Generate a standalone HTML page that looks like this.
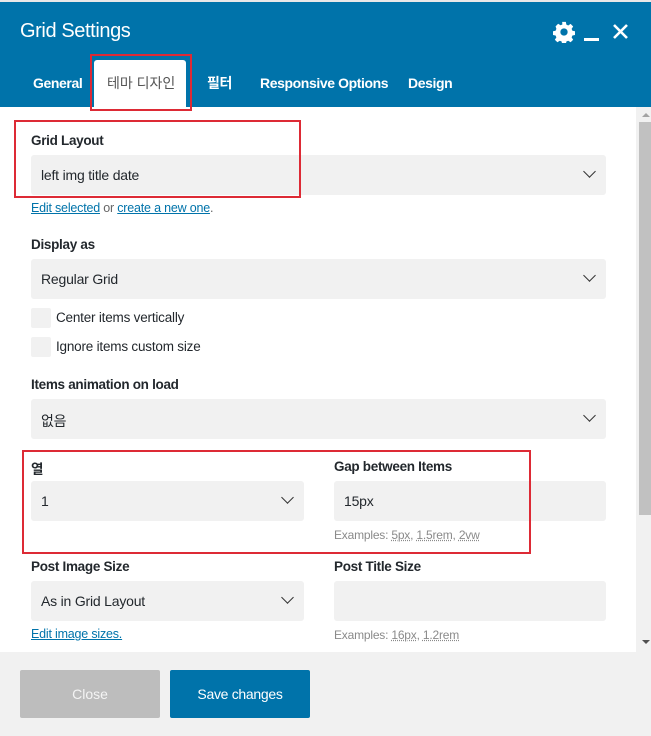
<!DOCTYPE html>
<html><head><meta charset="utf-8"><style>
*{box-sizing:border-box;margin:0;padding:0}
body{width:651px;height:736px;overflow:hidden;background:#fff;font-family:"Liberation Sans","Noto Sans CJK KR",sans-serif;position:relative;color:#23282d}
.a{position:absolute}
.hdr{left:0;top:2px;width:651px;height:105px;background:#0073aa}
.lbl{font-size:13.5px;font-weight:bold;color:#23282d;letter-spacing:-0.3px}
.fld{background:#f1f1f1;border-radius:3px;height:40px;font-size:14px;color:#23282d;padding:12px 10px;letter-spacing:-0.2px}
.chev{position:absolute;right:12px;top:12px;width:9px;height:9px;border-right:1.6px solid #333;border-bottom:1.6px solid #333;transform:rotate(45deg)}
.red{border:2px solid #dd2a35}
.lnk{color:#0073aa;text-decoration:underline;font-size:12.5px}
.ex{font-size:12px;color:#8a8a8a;letter-spacing:-0.2px}
.ex u{text-decoration:underline dotted}
.cb{width:20px;height:20px;background:#f1f1f1;border-radius:2px}
.tab{top:75px;font-size:14px;color:#fff;letter-spacing:-0.4px;font-weight:bold}
</style></head><body>
<div class="a" style="left:0;top:0;width:651px;height:2px;background:#e8e8e8"></div>
<div class="a hdr"></div>
<div class="a" style="left:20px;top:20px;font-size:20px;color:#fff;letter-spacing:-0.4px">Grid Settings</div>
<svg class="a" style="left:553px;top:21px" width="22" height="22" viewBox="0 0 24 24"><path fill="#fff" d="M10 1h4l.6 3 2 .9 2.6-1.7 2.8 2.8-1.7 2.6.9 2 3 .6v4l-3 .6-.9 2 1.7 2.6-2.8 2.8-2.6-1.7-2 .9-.6 3h-4l-.6-3-2-.9-2.6 1.7-2.8-2.8 1.7-2.6-.9-2-3-.6v-4l3-.6.9-2L2.8 5.8 5.6 3l2.6 1.7 2-.9z M12 8a4 4 0 100 8 4 4 0 000-8z" fill-rule="evenodd"/></svg>
<div class="a" style="left:584px;top:38px;width:15px;height:3px;background:#fff"></div>
<svg class="a" style="left:612px;top:23px" width="17" height="17" viewBox="0 0 17 17"><path d="M2 2L15 15M15 2L2 15" stroke="#fff" stroke-width="2.6"/></svg>
<div class="a tab" style="left:33px">General</div>
<div class="a" style="left:94px;top:60px;width:92px;height:48px;background:#fff;border-radius:3px 3px 0 0"></div>
<div class="a red" style="left:90px;top:54px;width:102px;height:57px"></div>
<div class="a" style="left:107px;top:73px;font-size:14px;color:#555">테마 디자인</div>
<div class="a tab" style="left:207px;top:73px">필터</div>
<div class="a tab" style="left:260px">Responsive Options</div>
<div class="a tab" style="left:408px">Design</div>

<div class="a" style="left:636px;top:107px;width:15px;height:545px;background:#f1f1f1"></div>
<div class="a" style="left:639px;top:122px;width:12px;height:393px;background:#c1c1c1"></div>
<div class="a" style="left:642px;top:113px;border:4px solid transparent;border-bottom:4px solid #a3a3a3;border-top:0"></div>
<div class="a" style="left:642px;top:640px;border:4px solid transparent;border-top:4px solid #505050;border-bottom:0"></div>

<div class="a lbl" style="left:31px;top:133px">Grid Layout</div>
<div class="a fld" style="left:31px;top:155px;width:575px">left img title date<div class="chev"></div></div>
<div class="a red" style="left:14px;top:120px;width:287px;height:78px"></div>
<div class="a" style="left:31px;top:201px;font-size:12.5px;color:#666;letter-spacing:-0.2px"><span class="lnk">Edit selected</span> or <span class="lnk">create a new one</span>.</div>

<div class="a lbl" style="left:31px;top:237px">Display as</div>
<div class="a fld" style="left:31px;top:259px;width:575px">Regular Grid<div class="chev"></div></div>
<div class="a cb" style="left:31px;top:308px"></div>
<div class="a" style="left:56px;top:310px;font-size:13.5px;letter-spacing:-0.2px">Center items vertically</div>
<div class="a cb" style="left:31px;top:337px"></div>
<div class="a" style="left:56px;top:339px;font-size:13.5px;letter-spacing:-0.2px">Ignore items custom size</div>

<div class="a lbl" style="left:31px;top:377px">Items animation on load</div>
<div class="a fld" style="left:31px;top:399px;width:575px">없음<div class="chev"></div></div>

<div class="a lbl" style="left:31px;top:458px">열</div>
<div class="a fld" style="left:31px;top:481px;width:273px">1<div class="chev"></div></div>
<div class="a lbl" style="left:334px;top:459px">Gap between Items</div>
<div class="a fld" style="left:334px;top:481px;width:272px">15px</div>
<div class="a ex" style="left:334px;top:528px">Examples: <u>5px</u>, <u>1.5rem</u>, <u>2vw</u></div>
<div class="a red" style="left:22px;top:450px;width:509px;height:104px"></div>

<div class="a lbl" style="left:31px;top:559px">Post Image Size</div>
<div class="a fld" style="left:31px;top:581px;width:273px">As in Grid Layout<div class="chev"></div></div>
<div class="a lbl" style="left:334px;top:559px">Post Title Size</div>
<div class="a fld" style="left:334px;top:581px;width:272px"></div>
<div class="a lnk" style="left:31px;top:627px;letter-spacing:-0.2px">Edit image sizes.</div>
<div class="a ex" style="left:334px;top:628px">Examples: <u>16px</u>, <u>1.2rem</u></div>

<div class="a" style="left:0;top:652px;width:651px;height:84px;background:#f1f1f1"></div>
<div class="a" style="left:20px;top:670px;width:140px;height:48px;background:#bdbdbd;border-radius:2px;color:#f4f4f4;font-size:14px;text-align:center;line-height:48px">Close</div>
<div class="a" style="left:170px;top:670px;width:140px;height:48px;background:#0073aa;border-radius:2px;color:#fff;font-size:14px;text-align:center;line-height:48px;letter-spacing:-0.3px">Save changes</div>
</body></html>
